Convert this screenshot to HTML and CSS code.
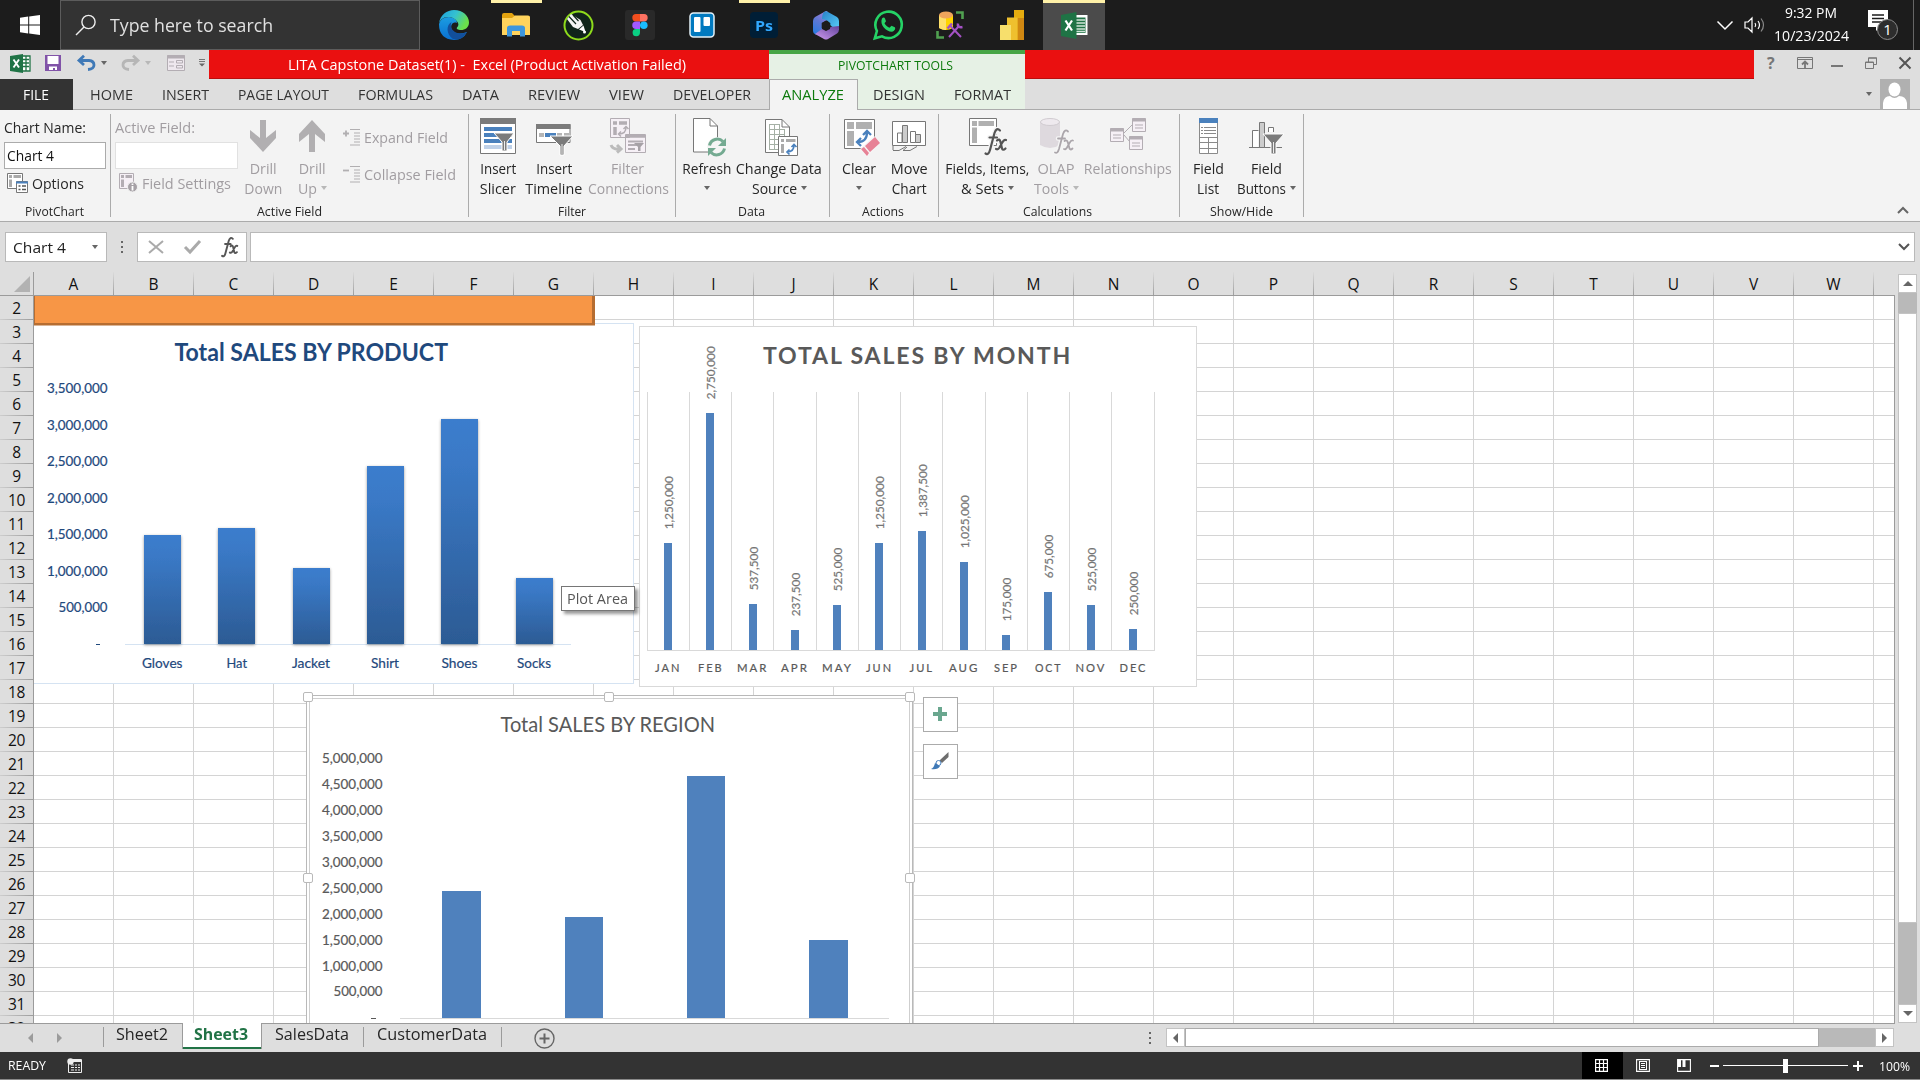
FILE: index.html
```html
<!DOCTYPE html>
<html lang="en">
<head>
<meta charset="utf-8">
<title>LITA Capstone Dataset(1) - Excel</title>
<link rel="stylesheet" href="styles.css">
</head>
<body>
<div class="screen">
  <header class="taskbar">
    <div class="start"><svg width="20" height="20" viewBox="0 0 20 20" fill="#fff"><path d="M0 2.800 8.200 1.600V9.500H0zM9.200 1.500 20 0V9.500H9.200zM0 10.500H8.200V18.400L0 17.200zM9.200 10.500H20V20L9.200 18.500z"/></svg></div>
    <div class="search">
      <svg width="22" height="22" viewBox="0 0 22 22" fill="none" stroke="#eee" stroke-width="1.400"><circle cx="13.500" cy="8" r="6.600"/><path d="M9 13 1 21"/></svg>
      <span class="t" data-w="163">Type here to search</span>
    </div>
    <div class="apps">
      <div class="app"><svg width="30" height="30" viewBox="0 0 30 30"><defs><linearGradient id="e1" x1="0" y1="0" x2="1" y2=".4"><stop offset="0" stop-color="#1a9fe0"/><stop offset=".55" stop-color="#35c1d0"/><stop offset="1" stop-color="#6be04a"/></linearGradient><linearGradient id="e2" x1="0" y1="0" x2="0" y2="1"><stop offset="0" stop-color="#1b9de2"/><stop offset="1" stop-color="#0a6fd0"/></linearGradient></defs><path d="M0 14Q2 7 10 7 18 8 18 13C13 11 11 16 13 20Q17 26 28 22 24 30 15 30 0 29 0 14z" fill="url(#e2)"/><path d="M12.500 12C7 15 7 24 14 29Q23 31 28 22 21 25 16 22 10 18 12.500 12z" fill="#124f9c"/><path d="M0 13.500C1 5 8 0 15 0c9 0 15 6 15 12.500 0 5-4 7.500-8 7.500-3 0-5-1-4-2.500 2-2 1.500-4 .5-5.500C16 8 12 7 9 7 4 7 1 10 0 13.500z" fill="url(#e1)"/></svg></div>
      <div class="app open"><svg width="28" height="24" viewBox="0 0 28 24"><path d="M0 2Q0 0 2 0H10L13 3H26Q28 3 28 5V9H0z" fill="#e2a20f"/><path d="M0 5H10L13 2.500H26Q28 2.500 28 4.500V22H0z" fill="#ffd35c"/><path d="M5 23.500V15Q5 12.500 8 12.500H20Q23 12.500 23 15V23.500H18V18H10V23.500z" fill="#3d96dd"/></svg></div>
      <div class="app"><svg width="31" height="31" viewBox="0 0 31 31"><circle cx="15.500" cy="15.500" r="14" fill="#10251a" stroke="#8edb1c" stroke-width="2"/><path d="M4 9 8 4 17.500 10 20 15 15 19 10 17z" fill="#f4f4f4"/><path d="M6 6.500 13 14M10 5 15.500 11" stroke="#10251a" stroke-width="1.200"/><path d="M20.500 15.500 22.500 22 16 19.500z" fill="#fff"/><circle cx="21.500" cy="22" r="1.500" fill="#fff"/></svg></div>
      <div class="app"><svg width="30" height="30" viewBox="0 0 30 30"><rect width="30" height="30" rx="3" fill="#292929"/><path d="M15 4h-4a3.700 3.700 0 0 0 0 7.400H15z" fill="#f24e1e"/><path d="M15 4h4a3.700 3.700 0 0 1 0 7.400H15z" fill="#ff7262"/><path d="M15 11.400h-4a3.700 3.700 0 0 0 0 7.500H15z" fill="#a259ff"/><circle cx="18.800" cy="15.200" r="3.800" fill="#1abcfe"/><path d="M15 18.900h-4a3.700 3.700 0 1 0 4 3.700z" fill="#0acf83"/></svg></div>
      <div class="app"><svg width="26" height="26" viewBox="0 0 26 26"><rect x="1" y="1" width="24" height="24" rx="3.500" fill="#0079bf" stroke="#e4f1f8" stroke-width="1.500"/><rect x="5" y="5" width="6.500" height="15" rx="1" fill="#fff"/><rect x="14.500" y="5" width="6.500" height="9" rx="1" fill="#fff"/></svg></div>
      <div class="app open"><span class="ps"><span class="t" data-w="18">Ps</span></span></div>
      <div class="app"><svg width="26" height="29" viewBox="0 0 26 29"><defs><linearGradient id="m1" x1=".7" y1="0" x2=".2" y2="1"><stop offset="0" stop-color="#a883dc"/><stop offset=".5" stop-color="#5f78d4"/><stop offset="1" stop-color="#2a7be0"/></linearGradient><linearGradient id="m2" x1="0" y1="0" x2="1" y2="1"><stop offset="0" stop-color="#2a82c8"/><stop offset="1" stop-color="#58d0fa"/></linearGradient><linearGradient id="m3" x1="0" y1="1" x2="1" y2="0"><stop offset="0" stop-color="#cf9df0"/><stop offset="1" stop-color="#63429c"/></linearGradient></defs><path d="M13 0 2 6Q0 7.500 0 10V20Q0 22.500 2.500 23.500 8 23 9 18V12L18 7 14 0z" fill="url(#m1)"/><path d="M11 1Q13-.5 15 1L24 6Q26 7.500 26 10V18Q25 21 22 18L17 14Q17 11 13 9L9 8Q9 3 11 1z" fill="url(#m2)"/><path d="M26 18Q26 21 24 22.500L15 28Q13 29 11 28L2 23 9 18 13 20 17 18 17 16 26 15z" fill="url(#m3)"/><path d="M13 9.500 17.300 12V17L13 19.500 8.700 17V12z" fill="#1c1c1c"/></svg></div>
      <div class="app"><svg width="30" height="30" viewBox="0 0 30 30"><path d="M1.800 28.300 3.900 21A13.200 13.200 0 1 1 9 26.300z" fill="#1c1c1c" stroke="#25d366" stroke-width="2.600"/><path d="M9 8.500c1-1.500 2.500-1.500 3 0l1 2.700-1.500 2c1 2 3 3.800 5 4.600l2-2.100 3.300 1.500c1 1 0 4-3 4.500-5.500 0-12.500-7-9.800-13.200z" fill="#25d366"/></svg></div>
      <div class="app"><svg width="28" height="28" viewBox="0 0 28 28"><path d="M3 4V17Q10 21 17 17V4z" fill="#ffd400"/><path d="M3 4V17Q7 19.500 10 19V4z" fill="#ffe16a"/><ellipse cx="10" cy="4" rx="7" ry="3.500" fill="#efa55c"/><path d="M20 1.500H26.500V8M1.500 20V26.500H8" fill="none" stroke="#50a050" stroke-width="2.600"/><path d="M13.500 14 25 26M13 26 23 15" fill="none" stroke="#a452c4" stroke-width="2"/><path d="M11.500 17.500 16 12.500M22 12.500Q21 17 26.500 16" fill="none" stroke="#a452c4" stroke-width="2.600"/></svg></div>
      <div class="app"><svg width="24" height="30" viewBox="0 0 24 30"><path d="M14 0H24V30H14z" fill="#e6ac0f"/><path d="M17.500 8H24V30H17.500z" fill="#d08812"/><path d="M7 7.500H17.500V30H7z" fill="#efc02e"/><path d="M0 15H11V30H0z" fill="#f7df6c"/></svg></div>
      <div class="app open current"><svg width="27" height="27" viewBox="0 0 27 27"><path d="M14 3H26.500V23H14z" fill="#fff"/><path d="M14 5.500H24.500V21H14z" fill="#217346"/><path d="M15 8H24M15 11H24M15 14H24M15 17H24M15 19.500H24" stroke="#cfe5d8" stroke-width="1.400"/><path d="M0 3 15.500 0V27L0 24z" fill="#1f7345"/><path d="M4.500 8.500 11 18.500M11 8.500 4.500 18.500" stroke="#fff" stroke-width="2.200"/></svg></div>
    </div>
    <div class="tray">
      <svg width="16" height="9" viewBox="0 0 16 9" fill="none" stroke="#fff" stroke-width="1.500"><path d="M.5.500 8 8 15.500.5"/></svg>
      <svg class="vol" width="22" height="18" viewBox="0 0 22 18" fill="none" stroke="#fff" stroke-width="1.200"><path d="M1 6H4L8 2V16L4 12H1zM11 7q1.500 2 0 4M14 5q3 4 0 8"/><path d="M17 2.500q5 6.500 0 13" stroke="#888"/></svg>
      <div class="clock"><span class="t" data-w="52">9:32 PM</span><span class="t" data-w="75">10/23/2024</span></div>
      <svg class="note" width="32" height="32" viewBox="0 0 32 32"><path d="M1 1H21V18H13L9 22V18H1z" fill="#fff"/><path d="M5 6H17M5 9.500H17M5 13H15" stroke="#1c1c1c" stroke-width="1.300"/><circle cx="20.500" cy="20.500" r="10" fill="#2d2d2d" stroke="#8a8a8a"/><text x="20.500" y="26" text-anchor="middle" fill="#fff" font-size="15">1</text></svg>
      <i class="peek"></i>
    </div>
  </header>

  <div class="titlebar">
    <div class="quick">
      <svg width="21" height="19" viewBox="0 0 21 19"><path d="M11 2H20V17H11z" fill="#fff" stroke="#217346" stroke-width="1.300"/><path d="M12 5.500H19M12 9H19M12 12.500H19M16 2V17" stroke="#217346" stroke-width="1.300"/><path d="M0 2 13 0V19L0 17z" fill="#1f7345"/><path d="M3.500 5.500 9 13.500M9 5.500 3.500 13.500" stroke="#fff" stroke-width="1.900"/></svg>
      <svg width="16" height="16" viewBox="0 0 16 16"><path d="M0 0H16V16H0z" fill="#8153a8"/><path d="M2.500 1H13.500V9H2.500zM4 11.500H12V15H10V13H8V15H4z" fill="#fff"/></svg>
      <svg width="19" height="16" viewBox="0 0 19 16" fill="none" stroke="#3f79b7" stroke-width="2.800"><path d="M7 0.800 2 5.500 7 10M2 5.500H12Q17 6 17 10T11 14.500"/></svg>
      <i class="caret"></i>
      <svg width="19" height="16" viewBox="0 0 19 16" fill="none" stroke="#b6b6b6" stroke-width="2.800"><path d="M12 0.800 17 5.500 12 10M17 5.500H7Q2 6 2 10T8 14.500"/></svg>
      <i class="caret pale"></i>
      <svg width="18" height="16" viewBox="0 0 18 16" fill="none" stroke="#b3adb3"><path d="M.5.500H17.500V15.500H.5z" fill="#eee8ee"/><path d="M0 2H18" stroke-width="3"/><path d="M2 7H7M2 11H7M9.500 5.500H15.500V8H9.500zM9.500 10.500H15.500V13H9.500z"/></svg>
      <svg width="6" height="8" viewBox="0 0 6 8"><path d="M0 .5H6M0 2.500H6" stroke="#777"/><path d="M0 4.500H6L3 7.500z" fill="#666"/></svg>
    </div>
    <div class="doc"><span class="t" data-w="398">LITA Capstone Dataset(1) -&nbsp; Excel (Product Activation Failed)</span></div>
    <div class="ctx"><span class="t" data-w="115">PIVOTCHART TOOLS</span></div>
    <div class="rest"></div>
    <div class="winbtns">
      <b>?</b>
      <svg width="16" height="12" viewBox="0 0 16 12" fill="none" stroke="#777"><path d="M.5.500H15.500V11.500H.5zM0 2.500H16"/><path d="M8 11V5M5 7.500 8 4.500 11 7.500" stroke-width="1.800"/></svg>
      <svg width="12" height="12" viewBox="0 0 12 12"><path d="M0 9H12" stroke="#777" stroke-width="2"/></svg>
      <svg width="12" height="12" viewBox="0 0 12 12" fill="none" stroke="#777"><path d="M.5 5H8.500V11.500H.5zM3.500 5V.8H11.500V7.500H8.500M0 5.500H9M3.500 1.200H12"/></svg>
      <svg width="12" height="12" viewBox="0 0 12 12" stroke="#555" stroke-width="2"><path d="M.5.500 11.500 11.500M11.500.5.500 11.500"/></svg>
    </div>
  </div>

  <nav class="tabs">
    <div class="file"><span class="t" data-w="26">FILE</span></div>
    <div class="plain">
      <span class="t" data-w="43">HOME</span><span class="t" data-w="47">INSERT</span><span class="t" data-w="91">PAGE LAYOUT</span><span class="t" data-w="75">FORMULAS</span><span class="t" data-w="37">DATA</span><span class="t" data-w="52">REVIEW</span><span class="t" data-w="35">VIEW</span><span class="t" data-w="78">DEVELOPER</span>
    </div>
    <div class="active"><span class="t" data-w="62">ANALYZE</span></div>
    <div class="ctxtab"><span class="t" data-w="52">DESIGN</span><span class="t" data-w="57">FORMAT</span></div>
    <div class="user"><i class="caret"></i><svg width="30" height="30" viewBox="0 0 30 30"><path d="M0 0H30V30H0z" fill="#b0b0b0"/><ellipse cx="14.500" cy="10.500" rx="6" ry="7" fill="#fff"/><path d="M3 30V24Q4 17 10 17 14.500 21 19 17 26 17 27 24V30z" fill="#fff"/></svg></div>
  </nav>

  <section class="ribbon">
    <div class="group g-pivot">
      <div class="body col">
        <span class="t" data-w="82">Chart Name:</span>
        <div class="input"><span class="t" data-w="47">Chart 4</span></div>
        <div class="line"><svg width="21" height="20" viewBox="0 0 21 20" fill="#fff" stroke="#777"><path d="M.5.500H15.500V15.500H.5z"/><path d="M2 2H5V5H2zM6.500 2H14V5H6.500zM2 6.500H5V14H2z" fill="#aaa" stroke="none"/><path d="M9.500 8.500H20.500V19.500H9.500z"/><path d="M9 9.500H21" stroke="#4a81bd" stroke-width="2"/><path d="M11.500 13H13.500M11.500 16.500H13.500M15 13H19M15 16.500H19" stroke="#555" stroke-width="1.500"/></svg><span class="t" data-w="52">Options</span></div>
      </div>
      <div class="label"><span class="t" data-w="59">PivotChart</span></div>
    </div>
    <div class="group g-field dim">
      <div class="body">
        <div class="col">
          <span class="t" data-w="80">Active Field:</span>
          <div class="input"></div>
          <div class="line"><svg width="19" height="20" viewBox="0 0 19 20" fill="#f6f0f6" stroke="#b3adb3"><path d="M.5.500H14.500V15.500H.5z"/><path d="M2 2H5V5H2zM6.500 2H13V5H6.500zM2 6.500H5V14H2z" fill="#b3adb3" stroke="none"/><circle cx="13.500" cy="14" r="5" fill="#a6a1a6" stroke="#f2f2f2"/><path d="M13.500 10.500V12M13.500 13V17.500" stroke="#fff" stroke-width="1.800"/></svg><span class="t" data-w="89">Field Settings</span></div>
        </div>
        <div class="big w48"><svg width="28" height="36" viewBox="0 0 28 36"><path d="M11 2H17V20L27 12V20L14 34 1 20V12L11 20z" fill="#b1afb1"/></svg><span class="t" data-w="27">Drill</span><span class="t" data-w="38">Down</span></div>
        <div class="big w50"><svg width="28" height="36" viewBox="0 0 28 36"><path d="M11 34H17V16L27 24V16L14 2 1 16V24L11 16z" fill="#b1afb1"/></svg><span class="t" data-w="27">Drill</span><div><span class="t" data-w="19">Up</span><i class="caret pale"></i></div></div>
        <div class="pair">
          <div class="line"><svg width="17" height="18" viewBox="0 0 17 18" stroke="#b1afb1"><path d="M0 5.500H6M3 2.500V8.500" stroke-width="1.800"/><path d="M7 1.500H17M11 5H17M11 8H17M11 11H17M11 14H17M7 17H17"/></svg><span class="t" data-w="84">Expand Field</span></div>
          <div class="line"><svg width="17" height="18" viewBox="0 0 17 18" stroke="#b1afb1"><path d="M0 5.500H6" stroke-width="1.800"/><path d="M7 1.500H17M11 5H17M11 8H17M11 11H17M11 14H17M7 17H17"/></svg><span class="t" data-w="92">Collapse Field</span></div>
        </div>
      </div>
      <div class="label"><span class="t" data-w="65">Active Field</span></div>
    </div>
    <div class="group g-filter">
      <div class="body">
        <div class="big w48"><svg width="36" height="36" viewBox="0 0 36 36"><path d="M.5.500H35.500V35.500H.5z" fill="#fff" stroke="#777"/><path d="M0 0H36V6H0z" fill="#7b7b7b"/><path d="M4 11H32M4 17H32M4 23H32" stroke="#4a81bd" stroke-width="4"/><path d="M4 29H32" stroke="#bfd1e8" stroke-width="4"/><path d="M14 15H34L27 24V33H22V24z" fill="#7b7b7b" stroke="#fff"/><path d="M24.500 23V32" stroke="#eee"/></svg><span class="t" data-w="36">Insert</span><span class="t" data-w="36">Slicer</span></div>
        <div class="big w64"><svg width="38" height="36" viewBox="0 0 38 36"><path d="M1.500 6.500H35V24.500H1.500z" fill="#fff" stroke="#777"/><path d="M1 6H35.500V11H1z" fill="#7b7b7b"/><path d="M4 17H9M22 17H27M29 17H34" stroke="#b5b5b5" stroke-width="4"/><path d="M10 17H21" stroke="#4a81bd" stroke-width="4"/><path d="M15 18H38L29 28V37H25V28z" fill="#7b7b7b" stroke="#fff"/><path d="M27 26V36" stroke="#eee"/></svg><span class="t" data-w="36">Insert</span><span class="t" data-w="57">Timeline</span></div>
        <div class="big w84 dim"><svg width="36" height="36" viewBox="0 0 36 36" fill="none" stroke="#b3adb3"><path d="M.5.500H19.500V19.500H.5zM15.500 16.500H35.500V34.500H15.500z" fill="#f6f0f6"/><path d="M3 5H7M9 5H17M5 9V17M16 18H35" stroke-width="3.500"/><path d="M9 16Q16 16 16 9M11 13.500 8.500 16 11 18.500M13.500 11 16 8.500 18.500 11" stroke-width="1.500"/><path d="M1 27Q3 32 10 31M7 27 11 31 7 34.500" stroke="#bbb" stroke-width="3"/><path d="M18 23.500H33M18 27H28M18 31H25" stroke-width="1.800"/><path d="M24 25H34L30.500 29V33H28V29z" fill="#a6a1a6" stroke="none"/></svg><span class="t" data-w="33">Filter</span><span class="t" data-w="81">Connections</span></div>
      </div>
      <div class="label"><span class="t" data-w="28">Filter</span></div>
    </div>
    <div class="group g-data">
      <div class="body">
        <div class="big w53"><svg class="nudge" width="32" height="38" viewBox="0 0 32 38" fill="none"><path d="M.5.500H17L24.500 8V34H.5z" fill="#fff" stroke="#777"/><path d="M17 .5V8H24.500" stroke="#777"/><circle cx="24" cy="29" r="10" fill="#f5f5f5"/><path d="M16.500 27.500A8 8 0 0 1 30 23.500M31.500 30.500A8 8 0 0 1 18 34.500" stroke="#74aa91" stroke-width="3"/><path d="M33 20V28H25zM15 38V30H23z" fill="#74aa91"/></svg><span class="t" data-w="49">Refresh</span><div><i class="caret"></i></div></div>
        <div class="big w92"><svg class="nudge" width="34" height="38" viewBox="0 0 34 38" fill="none" stroke="#777"><path d="M.5 1.500H17L24.500 9V34.500H.5z" fill="#fff"/><path d="M17 1.500V9H24.500"/><path d="M4.500 6.500H15M4.500 11.500H20M4.500 16.500H20M4.500 21.500H14M4.500 26.500H14M4.500 31.500H14M4.500 6V32M9.500 6V32M14.500 6V18M19.500 11V18" stroke="#a5b0a5"/><path d="M13.500 18.500H32.500V37.500H13.500z" fill="#fff"/><path d="M16 22.500H19M21 22.500H30.500M17.500 26V35" stroke="#aaa" stroke-width="3"/><path d="M22 34Q29 34 29 27M24.500 31.500 22 34 24.500 36.500M26.500 29 29 26.500 31.500 29" stroke="#4a81bd" stroke-width="1.700"/></svg><span class="t" data-w="86">Change Data</span><div><span class="t" data-w="45">Source</span><i class="caret"></i></div></div>
      </div>
      <div class="label"><span class="t" data-w="27">Data</span></div>
    </div>
    <div class="group g-actions">
      <div class="body">
        <div class="big w50"><svg class="nudge" width="36" height="38" viewBox="0 0 36 38" fill="none"><path d="M.5 1.500H30.500V30.500H.5z" fill="#fff" stroke="#777"/><path d="M3 4H10V11H3zM12 4H28V11H12zM3 13H10V28H3z" fill="#b0b0b0"/><path d="M14 24Q23 24 23 14M17 20 13 24 17 28M19 17 23 13 27 17" stroke="#4a81bd" stroke-width="2.300"/><path d="M15 32 30 18 37 25 23 39z" fill="#f5f5f5"/><path d="M21 28 31 19 36 25 26 34zM17 31 20 29 25 35 23 38z" fill="#e78296"/></svg><span class="t" data-w="34">Clear</span><div><i class="caret"></i></div></div>
        <div class="big w50"><svg width="34" height="36" viewBox="0 0 34 36" fill="#fff" stroke="#777"><path d="M.5 3.500H33.500V27.500H.5z"/><path d="M5.500 15H10V24.500H5.500zM18.500 13.500H23.500V24.500H18.500z"/><path d="M10.500 7.500H15.500V24.500H10.500zM23.500 16.500H28.500V24.500H23.500z" fill="#ccc"/><path d="M1 32.500H7L14 28.500M1 28V32M11 32.500H18L25 28.500M11 32.500 15 29" fill="none"/></svg><span class="t" data-w="37">Move</span><span class="t" data-w="35">Chart</span></div>
      </div>
      <div class="label"><span class="t" data-w="42">Actions</span></div>
    </div>
    <div class="group g-calc">
      <div class="body">
        <div class="big w90"><svg width="38" height="38" viewBox="0 0 38 38"><path d="M1.500.500H28.500V27.500H1.500z" fill="#fff" stroke="#777"/><path d="M4 3H9V8H4zM10.500 3H26V8H10.500zM4 9.500H9V25H4z" fill="#b0b0b0"/><g fill="none" stroke-linecap="round"><path id="fxp" d="M32 12.500Q28.500 9 26.500 15L22 32Q20.500 37.500 17.500 35.500M21.500 19.500H29M29 22.500Q31.500 20 32.500 24L34 30.500Q35 33 37.500 30.500M38 22Q36 21 34 25L31.500 29.500Q30 32 28 31" stroke="#f5f5f5" stroke-width="5"/><path d="M32 12.500Q28.500 9 26.500 15L22 32Q20.500 37.500 17.500 35.500M21.500 19.500H29M29 22.500Q31.500 20 32.500 24L34 30.500Q35 33 37.500 30.500M38 22Q36 21 34 25L31.500 29.500Q30 32 28 31" stroke="#555" stroke-width="2.200"/></g></svg><span class="t" data-w="84">Fields, Items,</span><div><span class="t" data-w="43">&amp; Sets</span><i class="caret"></i></div></div>
        <div class="big w49 dim"><svg width="36" height="38" viewBox="0 0 36 38"><path d="M1 4V27Q11 33 21 27V4z" fill="#ded9de"/><ellipse cx="11" cy="4" rx="9.500" ry="3.500" fill="#eee9ee" stroke="#d0cbd0"/><g fill="none" stroke-linecap="round"><path d="M29 13.500Q26 10.500 24 16L20 31Q18.500 36 16 34.500M19 20.500H26M25.500 23Q28 21 29 25L30.500 30.500Q31.500 32.500 33.500 30.500M34 22.500Q32 22 30.500 25L28 29.500Q26.500 32 25 31" stroke="#f5f5f5" stroke-width="4.500"/><path d="M29 13.500Q26 10.500 24 16L20 31Q18.500 36 16 34.500M19 20.500H26M25.500 23Q28 21 29 25L30.500 30.500Q31.500 32.500 33.500 30.500M34 22.500Q32 22 30.500 25L28 29.500Q26.500 32 25 31" stroke="#aba6ab" stroke-width="1.800"/></g></svg><span class="t" data-w="37">OLAP</span><div><span class="t" data-w="35">Tools</span><i class="caret pale"></i></div></div>
        <div class="big w94 dim"><svg width="36" height="36" viewBox="0 0 36 36" fill="#f6f0f6" stroke="#b3adb3"><path d="M14 15 22 7M14 17 20 24"/><path d="M.5 10.500H13.500V23.500H.5zM22.500.500H35.500V13.500H22.500zM19.500 18.500H32.500V31.500H19.500z"/><path d="M.5 12H13.500M22.500 2H35.500M19.500 20H32.500" stroke-width="3"/><path d="M3 17H11M3 20H11M25 7H33M25 10H33M22 25H30M22 28H30"/></svg><span class="t" data-w="88">Relationships</span></div>
      </div>
      <div class="label"><span class="t" data-w="69">Calculations</span></div>
    </div>
    <div class="group g-show">
      <div class="body">
        <div class="big w47"><svg width="19" height="36" viewBox="0 0 19 36" fill="none" stroke="#8a8a8a"><path d="M.5.500H18.500V35.500H.5z" fill="#fff"/><path d="M0 2.500H19" stroke="#4a81bd" stroke-width="5"/><path d="M2 9.500H4M2 12.500H4M2 15.500H4M5 9.500H17M5 12.500H17M5 15.500H17M0 19.500H19M1 24.500H18M1 30.500H18M9.500 20V35"/></svg><span class="t" data-w="31">Field</span><span class="t" data-w="22">List</span></div>
        <div class="big w68"><svg width="36" height="36" viewBox="0 0 36 36" fill="#fff" stroke="#777"><path d="M1 29.500H34M4.500 29.500V12.500H10.500M20.500 14V9.500H25.500V14"/><path d="M5 13H10V29H5z" stroke="none"/><path d="M11.500 4.500H16.500V29.500H11.500z" fill="#ccc"/><path d="M15 16H36L28 25V36H23V25z" fill="#7b7b7b" stroke="#fff"/><path d="M25.500 24V35" stroke="#eee"/></svg><span class="t" data-w="31">Field</span><div><span class="t" data-w="49">Buttons</span><i class="caret"></i></div></div>
      </div>
      <div class="label"><span class="t" data-w="63">Show/Hide</span></div>
    </div>
    <svg class="collapse" width="12" height="8" viewBox="0 0 12 8" fill="none" stroke="#666" stroke-width="2"><path d="M1 7 6 2 11 7"/></svg>
  </section>

  <section class="formula">
    <div class="name"><span class="t" data-w="53">Chart 4</span><i class="caret"></i></div>
    <div class="dots"><i></i><i></i><i></i></div>
    <div class="fxbox">
      <svg width="16" height="14" viewBox="0 0 16 14" stroke="#aaa" stroke-width="2"><path d="M1 1 15 13M15 1 1 13"/></svg>
      <svg width="17" height="14" viewBox="0 0 17 14" fill="none" stroke="#aaa" stroke-width="3"><path d="M1 7 6 12 16 1"/></svg>
      <svg width="17" height="20" viewBox="16 10 23 27" preserveAspectRatio="none" fill="none" stroke="#555" stroke-width="2.600" stroke-linecap="round"><path d="M32 12.500Q28.500 9 26.500 15L22 32Q20.500 37.500 17.500 35.500M21.500 19.500H29M29 22.500Q31.500 20 32.500 24L34 30.500Q35 33 37.500 30.500M38 22Q36 21 34 25L31.500 29.500Q30 32 28 31"/></svg>
    </div>
    <div class="entry"><svg width="12" height="8" viewBox="0 0 12 8" fill="none" stroke="#555" stroke-width="2"><path d="M1 1 6 6 11 1"/></svg></div>
  </section>

  <main class="sheet">
    <div class="corner"><svg width="16" height="16" viewBox="0 0 16 16"><path d="M16 0V16H0z" fill="#b2b2b2"/></svg></div>
    <div class="cols" id="cols"></div>
    <div class="rows" id="rows"></div>
    <div class="cells">
      <svg class="charts" id="charts" width="1861" height="727" viewBox="34 296 1861 727">
        <defs><linearGradient id="bar" x1="0" y1="0" x2="0" y2="1"><stop offset="0" stop-color="#3b7dcd"/><stop offset=".2" stop-color="#3a79c6"/><stop offset="1" stop-color="#2c5b94"/></linearGradient>
        <filter id="sh" x="-20%" y="-5%" width="140%" height="110%"><feDropShadow dx="0" dy="1" stdDeviation="1.500" flood-opacity=".4"/></filter></defs>
      </svg>
      <div class="tooltip"><span class="t" data-w="61">Plot Area</span></div>
      <div class="chartbtn plus"><svg width="16" height="16" viewBox="0 0 16 16"><path d="M8 1V15M1 8H15" stroke="#6aa78f" stroke-width="4"/></svg></div>
      <div class="chartbtn brush"><svg width="18" height="18" viewBox="0 0 18 18"><path d="M17.500 0V5L11 11 8.500 8.500z" fill="#6d6d6d"/><circle cx="7.500" cy="11" r="2.500" fill="#fff" stroke="#4a81bd"/><path d="M0 17Q3 16 4 11L9 14Q7 18 0 17z" fill="#3f79b7"/></svg></div>
    </div>
    <div class="vscroll"><span class="btn"><i class="up"></i></span><span class="gap1"></span><span class="thumb"></span><span class="gap2"></span><span class="btn"><i class="down"></i></span></div>
  </main>

  <section class="sheetbar">
    <div class="nav"><i class="left"></i><i class="right"></i></div>
    <div class="tab s1"><span class="t" data-w="52">Sheet2</span></div>
    <div class="tab s2"><span class="t" data-w="54">Sheet3</span></div>
    <div class="tab s3"><span class="t" data-w="74">SalesData</span></div>
    <div class="tab s4"><span class="t" data-w="110">CustomerData</span></div>
    <svg class="add" width="21" height="21" viewBox="0 0 21 21" fill="none" stroke="#666"><circle cx="10.500" cy="10.500" r="9.500" stroke-width="1.400"/><path d="M10.500 5.500V15.500M5.500 10.500H15.500" stroke-width="2"/></svg>
    <div class="dots"><i></i><i></i><i></i></div>
    <div class="hscroll"><span class="btn"><i class="left"></i></span><span class="thumb"></span><span class="gap"></span><span class="btn"><i class="right"></i></span></div>
  </section>

  <footer class="status">
    <span class="t ready" data-w="38">READY</span>
    <svg width="15" height="15" viewBox="0 0 15 15" fill="none" stroke="#eee"><path d="M1.500 5V14.500H14.500V1.500H6"/><path d="M6 2.500H14" stroke-width="3"/><path d="M4 7H7M8 7H10M11 7H13M4 9.500H7M8 9.500H10M11 9.500H13M4 12H7M8 12H10M11 12H13"/><circle cx="3.500" cy="3.500" r="3.200" fill="#eee" stroke="none"/></svg>
    <div class="view on"><svg width="13" height="13" viewBox="0 0 13 13" fill="none" stroke="#fff" stroke-width="1.200"><path d="M.6.600H12.400V12.400H.6zM4.500 0V13M8.500 0V13M0 4.500H13M0 8.500H13"/></svg></div>
    <div class="view"><svg width="14" height="13" viewBox="0 0 14 13" fill="none" stroke="#fff" stroke-width="1.100"><path d="M.6.600H13.400V12.400H.6zM3.500 2.500H10.500V10.500H3.500zM5 4.500H9M5 6.500H9M5 8.500H9"/></svg></div>
    <div class="view"><svg width="14" height="13" viewBox="0 0 14 13" fill="none" stroke="#fff" stroke-width="1.100"><path d="M.6.600H13.400V12.400H.6z"/><path d="M1 0H4V8H1zM5.500 0H8.500V8H5.500z" fill="#fff" stroke="none"/></svg></div>
    <i class="minus"></i>
    <div class="zoom"><i></i></div>
    <svg width="10" height="10" viewBox="0 0 10 10" stroke="#fff" stroke-width="2"><path d="M5 0V10M0 5H10"/></svg>
    <span class="t pct" data-w="31">100%</span>
  </footer>
</div>
<script src="script.js"></script>
</body>
</html>
```
FILE: styles.css
```css
* { box-sizing: border-box; }
body { margin: 0; font-family: "Open Sans", "Noto Sans", sans-serif; font-size: 15px; line-height: 20px; color: #262626; background: #dedede; }
svg { display: block; flex: none; overflow: visible; }
i { display: block; flex: none; font-style: normal; }
.t { display: inline-block; flex: none; white-space: nowrap; transform-origin: 0 50%; }
.screen { width: 1920px; height: 1080px; overflow: hidden; display: flex; flex-direction: column; background: #dedede; }
.caret { width: 0; height: 0; border: 3.500px solid transparent; border-top: 4px solid #666; border-bottom: 0; }
.caret.pale { border-top-color: #b8b8b8; }

/* taskbar */
.taskbar { height: 50px; flex: none; display: flex; background: #1c1c1c; color: #fff; }
.start { width: 60px; display: flex; align-items: center; justify-content: center; }
.search { width: 360px; height: 50px; border: 1px solid #5c5c5c; background: #333; display: flex; align-items: center; gap: 13px; padding-left: 14px; font-size: 18px; color: #e0e0e0; }
.apps { display: flex; margin-left: 3px; }
.app { width: 62px; display: flex; align-items: center; justify-content: center; }
.app.open { background: linear-gradient(#fff1a8, #fff1a8) 50% 0 / 51px 3px no-repeat; }
.app.current { background: linear-gradient(#fff1a8, #fff1a8) 0 0 / 62px 3px no-repeat, #4b4b4b; }
.ps { width: 28px; height: 26px; border-radius: 4px; background: #001e36; color: #31a8ff; font-weight: bold; font-size: 15px; display: flex; align-items: center; justify-content: center; }
.tray { margin-left: auto; width: 203px; display: flex; align-items: center; }
.tray .vol { margin-left: 11px; }
.clock { width: 88px; margin-left: 1px; display: flex; flex-direction: column; align-items: center; line-height: 23px; padding-bottom: 2px; }
.tray .note { margin-left: 12px; }
.peek { width: 1px; height: 50px; background: #666; margin-left: 14px; }

/* title bar */
.titlebar { height: 29px; flex: none; display: flex; }
.quick { width: 209px; display: flex; align-items: center; padding: 0 0 3px 10px; }
.quick svg:nth-child(2) { margin-left: 14px; }
.quick svg:nth-child(3) { margin-left: 16px; }
.quick .caret { margin-left: 5px; }
.quick svg:nth-child(5) { margin-left: 14px; }
.quick svg:nth-child(7) { margin-left: 16px; }
.quick svg:nth-child(8) { margin-left: 14px; }
.doc, .rest { background: #ea1010; border-bottom: 1px solid #b90e0e; }
.doc { width: 560px; padding: 4px 0 0 79px; color: #fff; }
.rest { width: 729px; }
.ctx { width: 256px; border-top: 4px solid #47a646; background: #e6f1e5; color: #0c7a0c; padding-left: 69px; font-size: 13.500px; line-height: 22px; }
.winbtns { width: 166px; display: flex; align-items: center; padding: 0 0 3px 13px; }
.winbtns b { width: 10px; color: #777; margin-right: 20px; font-size: 16px; }
.winbtns svg + svg { margin-left: 22px; }
.winbtns svg:nth-of-type(2) { margin-left: 18px; }

/* tabs */
.tabs { height: 31px; flex: none; display: flex; border-bottom: 1px solid #ababab; line-height: 30px; color: #333; }
.tabs .t { line-height: 20px; margin-top: 5px; }
.file { width: 73px; height: 31px; background: #333; color: #fff; padding-left: 23px; }
.plain { width: 696px; display: flex; gap: 29px; padding-left: 17px; }
.active { width: 89px; height: 31px; border: 1px solid #ababab; border-bottom: 0; background: #f3f3f3; padding-left: 12px; color: #0c7a0c; }
.tabs .active .t, .tabs .file .t { display: block; width: max-content; }
.tabs .active { padding-top: 4px; }
.tabs .active .t { margin-top: 0; }
.ctxtab { width: 167px; background: #e6f1e5; display: flex; gap: 29px; padding-left: 15px; }
.user { margin-left: auto; width: 56px; display: flex; align-items: center; gap: 10px; padding-left: 3px; }
.user .caret { margin-left: -1px; }
.user { width: 57px; padding-left: 4px; }
.user svg { margin-left: -2px; }

/* ribbon */
.ribbon { height: 112px; flex: none; display: flex; background: #f3f3f3; border-bottom: 1px solid #ababab; padding-top: 4px; }
.group { height: 103px; border-right: 1px solid #ababab; }
.body { height: 88px; display: flex; }
.label { display: flex; justify-content: center; padding-right: 1px; font-size: 13.300px; line-height: 18px; color: #262626; }
.col { flex-direction: column; display: flex; padding-top: 3px; padding-left: 4px; }
.col > .t { align-self: flex-start; margin-bottom: 5px; }
.input { height: 27px; border: 1px solid #ababab; background: #fff; color: #111; padding: 2px 0 0 2px; }
.line { display: flex; align-items: center; gap: 4px; }
.col .line { margin-top: 4px; padding-left: 3px; }
.dim { color: #a19da1; }
.dim .input { border-color: #e1e1e1; width: 123px; }
.dim .col { width: 128px; }
.dim .col .line { padding-left: 4px; }
.g-pivot { width: 111px; }
.g-pivot .input { width: 102px; }
.g-pivot .label { padding-right: 2px; }
.g-field { width: 358px; }
.g-filter { width: 207px; padding-left: 5px; }
.g-data { width: 154px; padding-left: 4px; }
.g-actions { width: 109px; padding-left: 4px; }
.g-calc { width: 241px; padding-left: 3px; }
.g-show { width: 124px; padding-left: 5px; }
.g-filter .label, .g-data .label, .g-actions .label, .g-calc .label, .g-show .label { padding-right: 6px; }
.big { display: flex; flex-direction: column; align-items: center; padding-top: 4px; }
.big > svg { margin-bottom: 4px; height: 36px; }
.big > svg.nudge { height: 38px; margin: 0 0 2px 5px; }
.big > div { display: flex; align-items: center; gap: 4px; height: 20px; }
.w47 { width: 47px; } .w48 { width: 48px; } .w49 { width: 49px; } .w50 { width: 50px; } .w53 { width: 53px; }
.w64 { width: 64px; } .w68 { width: 68px; } .w84 { width: 84px; } .w90 { width: 90px; } .w92 { width: 92px; } .w94 { width: 94px; }
.big > svg[viewBox="0 0 38 38"], .big > svg[viewBox="0 0 36 38"]:not(.nudge) { height: 38px; margin-bottom: 2px; }
.pair { padding: 13px 0 0 6px; display: flex; flex-direction: column; gap: 17px; }
.collapse { margin: 92px 11px 0 auto; }

/* formula bar */
.formula { height: 50px; flex: none; display: flex; padding: 10px 5px 0 5px; }
.formula > div { height: 30px; }
.name { width: 102px; border: 1px solid #b9b9b9; background: #fff; display: flex; align-items: center; justify-content: space-between; padding: 0 8px 0 7px; color: #222; }
.dots { display: flex; flex-direction: column; justify-content: center; gap: 3px; width: 30px; align-items: center; }
.dots i { width: 2px; height: 2px; background: #666; }
.fxbox { width: 110px; border: 1px solid #b9b9b9; background: #fff; display: flex; align-items: center; padding-left: 10px; gap: 20px; }
.entry { margin-left: 3px; flex: 1; border: 1px solid #b9b9b9; background: #fff; display: flex; align-items: center; justify-content: flex-end; padding-right: 4px; }

/* sheet */
.sheet { height: 751px; flex: none; display: grid; grid-template-columns: 34px 1861px 25px; grid-template-rows: 24px 727px; color: #111; }
.corner { border-right: 1px solid #9b9b9b; border-bottom: 1px solid #9b9b9b; padding: 4px 0 0 14px; }
.cols { display: flex; border-bottom: 1px solid #9b9b9b; font-size: 15.500px; overflow: hidden; }
.cols span { width: 80px; flex: none; text-align: center; line-height: 24px; border-right: 1px solid; border-image: linear-gradient(#dedede, #9b9b9b) 1; }
.rows { grid-row: 2; grid-column: 1; overflow: hidden; border-right: 1px solid #9b9b9b; font-size: 15.500px; letter-spacing: -.4px; }
.rows span { display: block; height: 24px; line-height: 24px; text-align: center; border-bottom: 1px solid; border-image: linear-gradient(90deg, #cfcfcf, #9b9b9b) 1; }
.cells { grid-row: 2; grid-column: 2; position: relative; overflow: hidden; border-right: 1px solid #9b9b9b; background: repeating-linear-gradient(90deg, transparent 0 79px, #d4d4d4 79px 80px), repeating-linear-gradient(#fff 0 23px, #d4d4d4 23px 24px); }
.charts { position: absolute; left: 0; top: 0; font-family: Lato, "Open Sans", sans-serif; }
.tooltip { position: absolute; left: 527px; top: 290px; width: 74px; height: 25px; padding: 2px 0 0 5px; border: 1px solid #767676; background: #fff; color: #575757; box-shadow: 3px 3px 3px rgba(0,0,0,.4); font-size: 14.500px; }
.chartbtn { position: absolute; left: 889px; width: 35px; height: 35px; border: 1px solid #ababab; background: #fff; display: flex; align-items: center; justify-content: center; padding: 0 1px 1px 0; }
.plus { top: 401px; }
.brush { top: 448px; }
.vscroll { grid-row: 1 / 3; grid-column: 3; margin: 2px 3px 0 3px; display: flex; flex-direction: column; background: #b9b9b9; }
.btn { width: 19px; height: 19px; flex: none; background: #fff; border: 1px solid #c3c3c3; display: flex; align-items: center; justify-content: center; }
.gap1 { height: 20px; }
.vscroll .thumb { height: 610px; background: #fff; border: 1px solid #c3c3c3; }
.gap2 { flex: 1; }
.up, .down, .left, .right { width: 0; height: 0; border: 5px solid transparent; }
.up { border-bottom-color: #666; border-top: 0; }
.down { border-top-color: #666; border-bottom: 0; }
.left { border-right-color: #666; border-left: 0; }
.right { border-left-color: #666; border-right: 0; }

/* sheet tabs */
.sheetbar { height: 29px; flex: none; display: flex; font-size: 16px; background: linear-gradient(#9b9b9b, #9b9b9b) 0 0 / 1895px 1px no-repeat; }
.sheetbar .nav { width: 103px; display: flex; align-items: center; gap: 24px; padding-left: 28px; }
.nav .left { border-right-color: #9b9b9b; }
.nav .right { border-left-color: #9b9b9b; }
.tab { height: 29px; padding-top: 1px; }
.s1 { width: 79px; padding-left: 13px; background: linear-gradient(#9b9b9b, #9b9b9b) 0 4px / 1px 20px no-repeat; }
.s2 { width: 80px; height: 26px; padding-left: 11px; border: solid #9b9b9b; border-width: 0 1px; background: linear-gradient(#217346, #217346) 0 100% / 100% 2px no-repeat #fff; color: #217346; font-weight: bold; }
.s3 { width: 101px; padding-left: 13px; }
.s4 { width: 139px; padding-left: 14px; background: linear-gradient(#9b9b9b, #9b9b9b) 0 4px / 1px 20px no-repeat, linear-gradient(#9b9b9b, #9b9b9b) 100% 4px / 1px 20px no-repeat; }
.sheetbar .add { margin: 5px 0 0 32px; }
.sheetbar .dots { margin-left: 580px; }
.hscroll { width: 728px; height: 19px; margin: 5px 0 0 1px; display: flex; background: #b9b9b9; }
.hscroll .thumb { width: 634px; background: #fff; border: 1px solid #ababab; }
.hscroll .gap { flex: 1; }

/* status bar */
.status { height: 28px; flex: none; display: flex; align-items: center; background: #333; border-bottom: 1px solid #8a8a8a; color: #fff; font-size: 12.500px; padding-left: 8px; }
.status > svg { margin-left: 21px; }
.view { width: 41px; height: 27px; display: flex; align-items: center; justify-content: center; padding-right: 2px; }
.view.on { margin-left: 1500px; background: #000; }
.status .minus { width: 9px; height: 2px; background: #fff; margin-left: 5px; }
.zoom { width: 125px; height: 14px; margin-left: 4px; background: linear-gradient(#fff, #fff) 0 50% / 100% 1px no-repeat; }
.zoom i { width: 5px; height: 14px; background: #fff; margin-left: 60px; }
.status .zoom + svg { margin-left: 5px; }
.pct { margin-left: 16px; font-size: 13px; }
```
FILE: script.js
```js
// Column and row headers
const cols = document.getElementById('cols');
for (const c of 'ABCDEFGHIJKLMNOPQRSTUVW') {
  const s = document.createElement('span');
  s.textContent = c;
  cols.append(s);
}
const rows = document.getElementById('rows');
for (let r = 2; r <= 32; r++) {
  const s = document.createElement('span');
  s.textContent = r;
  rows.append(s);
}

// Squeeze each label to the width given in data-w
for (const el of document.querySelectorAll('.t[data-w]')) {
  const natural = el.getBoundingClientRect().width;
  const w = +el.dataset.w;
  const side = el.parentElement.matches('.big') ? (w - natural) / 2 : 0;
  el.style.transform = `scaleX(${w / natural})`;
  if (side) el.style.transformOrigin = '50% 50%';
  el.style.marginRight = `${side || w - natural}px`;
  if (side) el.style.marginLeft = `${side}px`;
}

// Charts, in screen units
const out = [];
const rect = (x, y, w, h, fill, extra = '') =>
  out.push(`<rect x="${x}" y="${y}" width="${w}" height="${h}" fill="${fill}" ${extra}/>`);
const text = (s, x1, x2, y, size, fill, extra = '') =>
  out.push(`<text x="${x1}" y="${y}" font-size="${size}" fill="${fill}" textLength="${x2 - x1}" lengthAdjust="spacingAndGlyphs" ${extra}>${s}</text>`);
const fmt = n => n.toLocaleString('en-US');

// Sales by product
rect(33.5, 323.5, 600, 360, '#fff', 'stroke="#d5e3f2"');
rect(34, 296, 561, 29.5, '#b66d31');
rect(35, 296, 557, 27, '#f79646');
text('Total SALES BY PRODUCT', 174.5, 448, 361, 24, '#1f497d', 'font-weight="bold"');
for (let i = 0; i < 7; i++) {
  const v = 3500000 - i * 500000;
  text(fmt(v), v < 1e6 ? 58.5 : 47, 107.5, 393.3 + i * 36.5, 12.6, '#1f497d', 'stroke="#1f497d" stroke-width=".2"');
}
rect(96, 644, 4, 1, '#1f497d');
rect(125, 644, 446, 1, '#d5e3f2');
[['Gloves', 144, 535, 142, 182.5], ['Hat', 218, 528, 226.5, 247], ['Jacket', 293, 568, 292, 330],
 ['Shirt', 367, 466, 371, 399], ['Shoes', 441, 419, 441.5, 477.5], ['Socks', 516, 578, 517, 551]]
  .forEach(([n, x, top, a, b]) => {
    rect(x, top, 37, 644 - top, 'url(#bar)', 'filter="url(#sh)"');
    text(n, a, b, 667.6, 12.6, '#1f497d', 'stroke="#1f497d" stroke-width=".2"');
  });

// Sales by month
rect(639.5, 326.5, 557, 360, '#fff', 'stroke="#d9d9d9"');
for (let i = 0; i <= 12; i++) rect(Math.floor(647 + i * 42.25), 392, 1, 258, '#d9d9d9');
rect(647, 650, 508, 1, '#d9d9d9');
text('TOTAL SALES BY MONTH', 763, 1072, 363.7, 22.8, '#595959', 'font-weight="bold" letter-spacing="1.8"');
[['JAN', 1250000, 543, 655, 680], ['FEB', 2750000, 413, 698, 722], ['MAR', 537500, 604, 737, 767],
 ['APR', 237500, 630, 781, 807.5], ['MAY', 525000, 605, 822, 851.5], ['JUN', 1250000, 543, 866, 891.5],
 ['JUL', 1387500, 531, 909.5, 932.5], ['AUG', 1025000, 562, 949, 978], ['SEP', 175000, 635, 994, 1017.5],
 ['OCT', 675000, 592, 1035, 1061], ['NOV', 525000, 605, 1075.5, 1105], ['DEC', 250000, 629, 1119.5, 1146]]
  .forEach(([m, v, top, a, b], i) => {
    const mid = 668.4 + i * 42.25;
    rect(Math.round(mid - 4.4), top, 8, 650 - top, '#4f81bd');
    text(m, a, b + 1.5, 672, 11.2, '#595959', 'letter-spacing="2" stroke="#595959" stroke-width=".2"');
    text(fmt(v), 0, v >= 1e6 ? 53 : 43.5, 0, 12, '#757575', `transform="translate(${mid + 4.7} ${top - 13.7}) rotate(-90)" stroke="#757575" stroke-width=".2"`);
  });

// Sales by region (selected)
rect(306.5, 695.5, 606, 400, '#fff', 'stroke="#b9b9b9"');
rect(309.5, 698.5, 600, 400, '#fff', 'stroke="#cfcfcf"');
for (const [x, y] of [[303.5, 692.5], [604.5, 692.5], [905.5, 692.5], [303.5, 873.5], [905.5, 873.5]])
  rect(x, y, 9, 9, '#fff', 'stroke="#b9b9b9" rx="1.5"');
text('Total SALES BY REGION', 500.5, 715, 732, 21.5, '#595959');
for (let i = 0; i < 10; i++) {
  const v = 5000000 - i * 500000;
  text(fmt(v), v < 1e6 ? 333.5 : 322, 382.5, 763.3 + i * 25.9, 12.6, '#595959', 'stroke="#595959" stroke-width=".2"');
}
rect(371, 1018, 5, 1, '#595959');
rect(400, 1018, 489, 1, '#d9d9d9');
[[442, 39, 891], [565, 38, 917], [687, 38, 776], [809, 39, 940]]
  .forEach(([x, w, top]) => rect(x, top, w, 1018 - top, '#4f81bd'));

document.getElementById('charts').insertAdjacentHTML('beforeend', out.join(''));
```
